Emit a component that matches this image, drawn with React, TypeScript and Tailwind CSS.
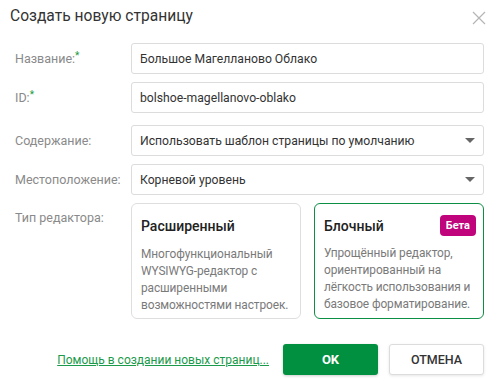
import React from "react";

const font = { fontFamily: "Roboto, 'Noto Sans', sans-serif" };

function Label({ children, required }: { children: React.ReactNode; required?: boolean }) {
  return (
    <div className="w-[131px] shrink-0 pl-[15px] text-[12.5px] text-[#8a8a8a]">
      {children}
      {required && <span className="relative -top-[4px] text-[10px] text-[#1a9a3a]">*</span>}
    </div>
  );
}

function Input({ value }: { value: string }) {
  return (
    <div className="flex h-[31px] w-[353px] items-center rounded-[3px] border border-[#dcdcdc] bg-white px-[8px] text-[12.2px] text-[#333]">
      {value}
    </div>
  );
}

function Select({ value }: { value: string }) {
  return (
    <div className="flex h-[31px] w-[353px] items-center justify-between rounded-[3px] border border-[#dcdcdc] bg-white pl-[8px] pr-[8px] text-[12.2px] text-[#333]">
      <span>{value}</span>
      <svg width="10" height="5" viewBox="0 0 10 5">
        <path d="M0 0 L10 0 L5 5 Z" fill="#666" />
      </svg>
    </div>
  );
}

export default function App() {
  return (
    <div className="h-[388px] w-[499px] bg-white" style={font}>
      <div className="flex items-center justify-between pl-[10px] pr-[13px] pt-[5px]">
        <div className="text-[15.6px] text-[#333]">Создать новую страницу</div>
        <svg width="14" height="14" viewBox="0 0 14 14" className="mt-[3px]">
          <path d="M1 1 L13 13 M13 1 L1 13" stroke="#b5b5b5" strokeWidth="1.2" />
        </svg>
      </div>

      <div className="mt-[15px] flex items-center">
        <Label required>Название:</Label>
        <Input value="Большое Магелланово Облако" />
      </div>
      <div className="mt-[8px] flex items-center">
        <Label required>ID:</Label>
        <Input value="bolshoe-magellanovo-oblako" />
      </div>
      <div className="mt-[12px] flex items-center">
        <Label>Содержание:</Label>
        <Select value="Использовать шаблон страницы по умолчанию" />
      </div>
      <div className="mt-[8px] flex items-center">
        <Label>Местоположение:</Label>
        <Select value="Корневой уровень" />
      </div>

      <div className="mt-[8px] flex items-start">
        <div className="pt-[6px]">
          <Label>Тип редактора:</Label>
        </div>
        <div className="flex gap-[13px]">
          <div className="h-[116px] w-[170px] rounded-[6px] border border-[#dedede] pl-[9px] pr-[5px] pt-[12px]">
            <div className="text-[14px] font-medium text-[#222]">Расширенный</div>
            <div className="mt-[9px] text-[11.9px] leading-[17px] tracking-[-0.1px] text-[#7a7a7a]">
              Многофункциональный WYSIWYG-редактор с расширенными возможностями настроек.
            </div>
          </div>
          <div className="h-[116px] w-[170px] rounded-[6px] border border-[#0c8f45] pl-[9px] pr-[6px] pt-[10px]">
            <div className="flex items-center justify-between pr-[1px]">
              <div className="pt-[2px] text-[14px] font-medium text-[#222]">Блочный</div>
              <div className="flex h-[21px] items-center rounded-[4px] bg-[#c0047c] px-[6px] text-[11px] font-bold text-white">
                Бета
              </div>
            </div>
            <div className="mt-[8px] text-[11.9px] leading-[17px] tracking-[-0.1px] text-[#7a7a7a]">
              Упрощённый редактор, ориентированный на лёгкость использования и базовое форматирование.
            </div>
          </div>
        </div>
      </div>

      <div className="mt-[25px] flex items-center justify-end pr-[15px]">
        <a className="mr-[14px] text-[12px] text-[#1a9a4a] underline">Помощь в создании новых страниц...</a>
        <div className="flex h-[31px] w-[95px] items-center justify-center rounded-[3px] bg-[#00903f] text-[13px] font-bold text-white shadow-[0_1px_3px_rgba(0,0,0,0.2)]">
          OK
        </div>
        <div className="ml-[11px] flex h-[31px] w-[95px] items-center justify-center rounded-[3px] border border-[#dcdcdc] bg-white text-[12.5px] font-medium text-[#333] shadow-[0_1px_3px_rgba(0,0,0,0.1)]">
          ОТМЕНА
        </div>
      </div>
    </div>
  );
}
